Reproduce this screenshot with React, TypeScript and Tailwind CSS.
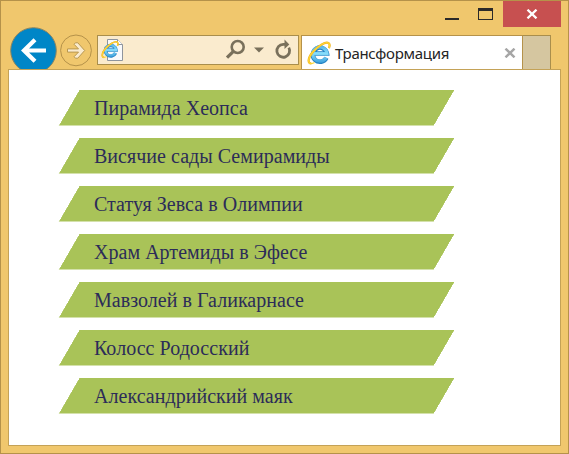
import React from 'react';

const wonders = [
  'Пирамида Хеопса',
  'Висячие сады Семирамиды',
  'Статуя Зевса в Олимпии',
  'Храм Артемиды в Эфесе',
  'Мавзолей в Галикарнасе',
  'Колосс Родосский',
  'Александрийский маяк',
];

function ExplorerLogo({ className, id }: { className: string; id: string }) {
  return (
    <svg className={className} viewBox="0 0 24 24" fill="none">
      <defs>
        <linearGradient id={id} gradientUnits="userSpaceOnUse" x1="0" y1="3" x2="0" y2="22">
          <stop offset="0" stopColor="#4aa9e0" />
          <stop offset="0.5" stopColor="#86dcfa" />
          <stop offset="1" stopColor="#3c9fdb" />
        </linearGradient>
      </defs>
      <path
        d="M19.400 16.800A7.100 7.100 0 1 1 20 12.600H7"
        stroke="#2583c4"
        strokeWidth="4.500"
      />
      <path
        d="M19.100 16.600A7.100 7.100 0 1 1 20 12.600H7"
        stroke={`url(#${id})`}
        strokeWidth="3.200"
      />
      <path
        d="M4.200 22.500C.6 22.600 .6 17.200 5.600 11.200 10.800 4.900 18.600 .3 21.600 2.100c1.300.9 1.200 2.900.3 5"
        stroke="#eeac1c"
        strokeWidth="2.200"
      />
      <path
        d="M7.500 21.500c-1.200.7-2.400 1.100-3.300 1C.6 22.600 .6 17.200 5.600 11.200 10.800 4.900 18.600 .3 21.600 2.100c1.300.9 1.200 2.900.3 5"
        stroke="#fdd535"
        strokeWidth="1.400"
      />
    </svg>
  );
}

function CaptionButtons() {
  return (
    <div className="flex h-[26px] justify-end pr-[7px]">
      <svg className="h-[26px] w-[20px]" viewBox="0 0 20 26">
        <path d="M3 17h14v2H3z" fill="#2b2a29" />
      </svg>
      <svg className="mr-[7px] ml-3 h-[26px] w-[22px]" viewBox="0 0 22 26">
        <path d="M4 7h15v12H4zM5 10v8h13v-8z" fill="#2b2a29" fillRule="evenodd" />
      </svg>
      <div className="flex w-[58px] items-center justify-center bg-[#c75050]">
        <svg className="h-[10px] w-[12px]" viewBox="0 0 12 10">
          <path d="M1.500 .7l9 8.600M10.500 .7l-9 8.600" stroke="#fff" strokeWidth="2.300" />
        </svg>
      </div>
    </div>
  );
}

function Toolbar() {
  return (
    <div className="flex h-[42px] items-start pl-[9px]">
      <svg className="h-[42px] w-[48px] shrink-0" viewBox="0 0 48 42">
        <circle cx="23.500" cy="23.500" r="22.800" fill="#0086c7" stroke="#8d8560" strokeWidth="1" />
        <path
          d="M36 23.500H14M25 12.700L14 23.500l11 10.800"
          fill="none"
          stroke="#fff"
          strokeWidth="4.200"
        />
      </svg>
      <svg className="ml-px h-[42px] w-[34px] shrink-0" viewBox="0 0 34 42">
        <circle cx="17" cy="23.400" r="15.400" fill="#f0c76d" stroke="#b5924a" />
        <path
          d="M8.500 21.900h11l-4.400-4.600 1.300-1.500h2.400l6.900 7.700-6.900 7.700h-2.400l-1.300-1.500 4.400-4.600h-11z"
          fill="#faebce"
          stroke="#b89850"
          strokeWidth="1"
        />
      </svg>
      <div className="mt-2 ml-[4px] flex h-[30px] w-[202px] shrink-0 items-center border border-[#a98e4c] bg-[#faebce]">
        <svg className="ml-[2px] h-[26px] w-[24px]" viewBox="0 0 24 26">
          <path d="M7.500 2.500h10l5 5v16h-15z" fill="#f8f9fb" stroke="#8e949d" />
          <path d="M17.500 2.500v5h5" fill="#fff" stroke="#8e949d" />
          <svg x="1" y="3" width="18" height="19" viewBox="0 0 24 24">
            <ExplorerLogo className="" id="page-e" />
          </svg>
        </svg>
        <svg className="ml-[101px] h-[22px] w-[22px]" viewBox="0 0 22 22">
          <circle cx="12.700" cy="8" r="6" fill="none" stroke="#79705b" strokeWidth="2.600" />
          <path d="M8.400 12.300L2 18.700" stroke="#79705b" strokeWidth="3.200" />
        </svg>
        <svg className="ml-[7px] h-[6px] w-[10px]" viewBox="0 0 10 6">
          <path d="M0 .5h10L5 5.500z" fill="#79705b" />
        </svg>
        <svg className="ml-[10px] h-[22px] w-[20px]" viewBox="0 0 20 22">
          <path
            d="M11 5.400H9.300a6.400 6.400 0 1 0 5.500 3.200"
            fill="none"
            stroke="#79705b"
            strokeWidth="2.800"
          />
          <path d="M10.500 .6l4.800 4.800-4.800 4.600z" fill="#79705b" />
        </svg>
      </div>
      <div className="mt-2 ml-[2px] flex h-[34px] w-[222px] shrink-0 items-center border border-b-0 border-[#b5924a] bg-white">
        <ExplorerLogo className="ml-[5px] h-[24px] w-[24px]" id="tab-e" />
        <span className="ml-[4px] w-[150px] font-['Noto_Sans',sans-serif] text-[15px] leading-5 tracking-[-0.3px] whitespace-nowrap text-[#252525]">
          Трансформация
        </span>
        <svg className="ml-[19px] h-[10px] w-[12px] shrink-0" viewBox="0 0 12 10">
          <path d="M1.500 .7l9 8.600M10.500 .7l-9 8.600" stroke="#a6a6a6" strokeWidth="2.500" />
        </svg>
      </div>
      <div className="mt-2 h-[34px] w-[28px] border border-b-0 border-l-0 border-[#a98e4c] bg-[#d5c6a0]" />
    </div>
  );
}

export default function App() {
  return (
    <div className="flex h-[454px] w-[569px] flex-col overflow-hidden border border-[#b5924a] bg-[#f0c76d]">
      <CaptionButtons />
      <Toolbar />
      <main className="mx-[7px] mb-[7px] flex-1 border border-[#c4a257] bg-white pt-5 pl-[60px]">
        <ul className="flex w-[375px] flex-col gap-3">
          {wonders.map((name) => (
            <li key={name} className="h-[36px] -skew-x-30 border-b border-[#d4e1ab] bg-[#a9c358] bg-clip-padding">
              <span className="block skew-x-30 pl-[25px] font-['Liberation_Serif',serif] text-[20px] leading-[36px] tracking-[0.03px] whitespace-nowrap text-[#2c2c58]">
                {name}
              </span>
            </li>
          ))}
        </ul>
      </main>
    </div>
  );
}
